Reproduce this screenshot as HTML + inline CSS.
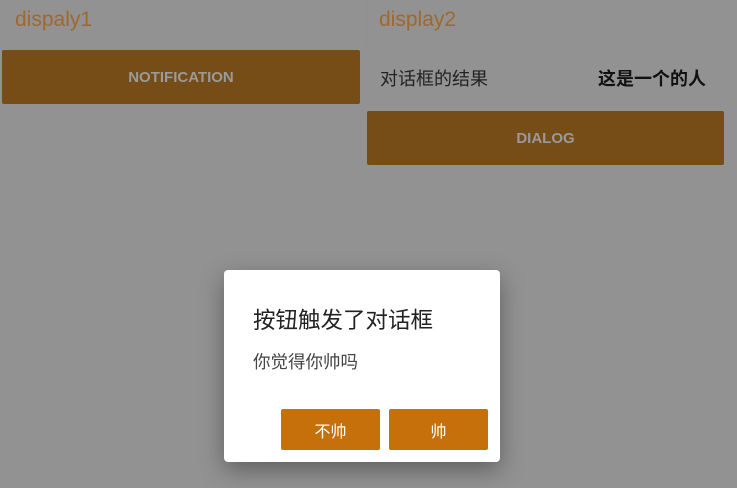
<!DOCTYPE html>
<html><head><meta charset="utf-8"><style>
html,body{margin:0;padding:0;width:737px;height:488px;overflow:hidden;background:#929292;font-family:"Liberation Sans","Noto Sans CJK SC",sans-serif;}
.abs{position:absolute}
.title{color:#a0682d;font-size:21px;}
.btn{position:absolute;background:#764c17;color:#9a9a9a;font-weight:bold;font-size:15px;display:flex;align-items:center;justify-content:center;border-radius:2px;}
.dlg{position:absolute;left:224px;top:270px;width:276px;height:192px;background:#fff;border-radius:4px;box-shadow:0 8px 24px rgba(0,0,0,.35);}
.db{position:absolute;top:139px;width:99px;height:41px;background:#c6700c;color:#fff;font-size:16px;display:flex;align-items:center;justify-content:center;border-radius:2px;}
</style></head><body>
<div class="abs" style="left:366px;top:0;width:1px;height:45px;background:#8e8e8e"></div>
<div class="abs title" style="left:15px;top:8px">dispaly1</div>
<div class="abs title" style="left:379px;top:8px">display2</div>
<div class="btn" style="left:2px;top:50px;width:358px;height:54px">NOTIFICATION</div>
<div class="abs" style="left:380px;top:65px;font-size:18px;color:#222">对话框的结果</div>
<div class="abs" style="left:598px;top:65px;font-size:18px;color:#111;font-weight:bold">这是一个的人</div>
<div class="btn" style="left:367px;top:111px;width:357px;height:54px">DIALOG</div>
<div class="dlg">
<div class="abs" style="left:29px;top:33px;font-size:22.5px;color:#222">按钮触发了对话框</div>
<div class="abs" style="left:29px;top:79px;font-size:17.5px;color:#444">你觉得你帅吗</div>
<div class="db" style="left:57px">不帅</div>
<div class="db" style="left:165px">帅</div>
</div>
</body></html>
